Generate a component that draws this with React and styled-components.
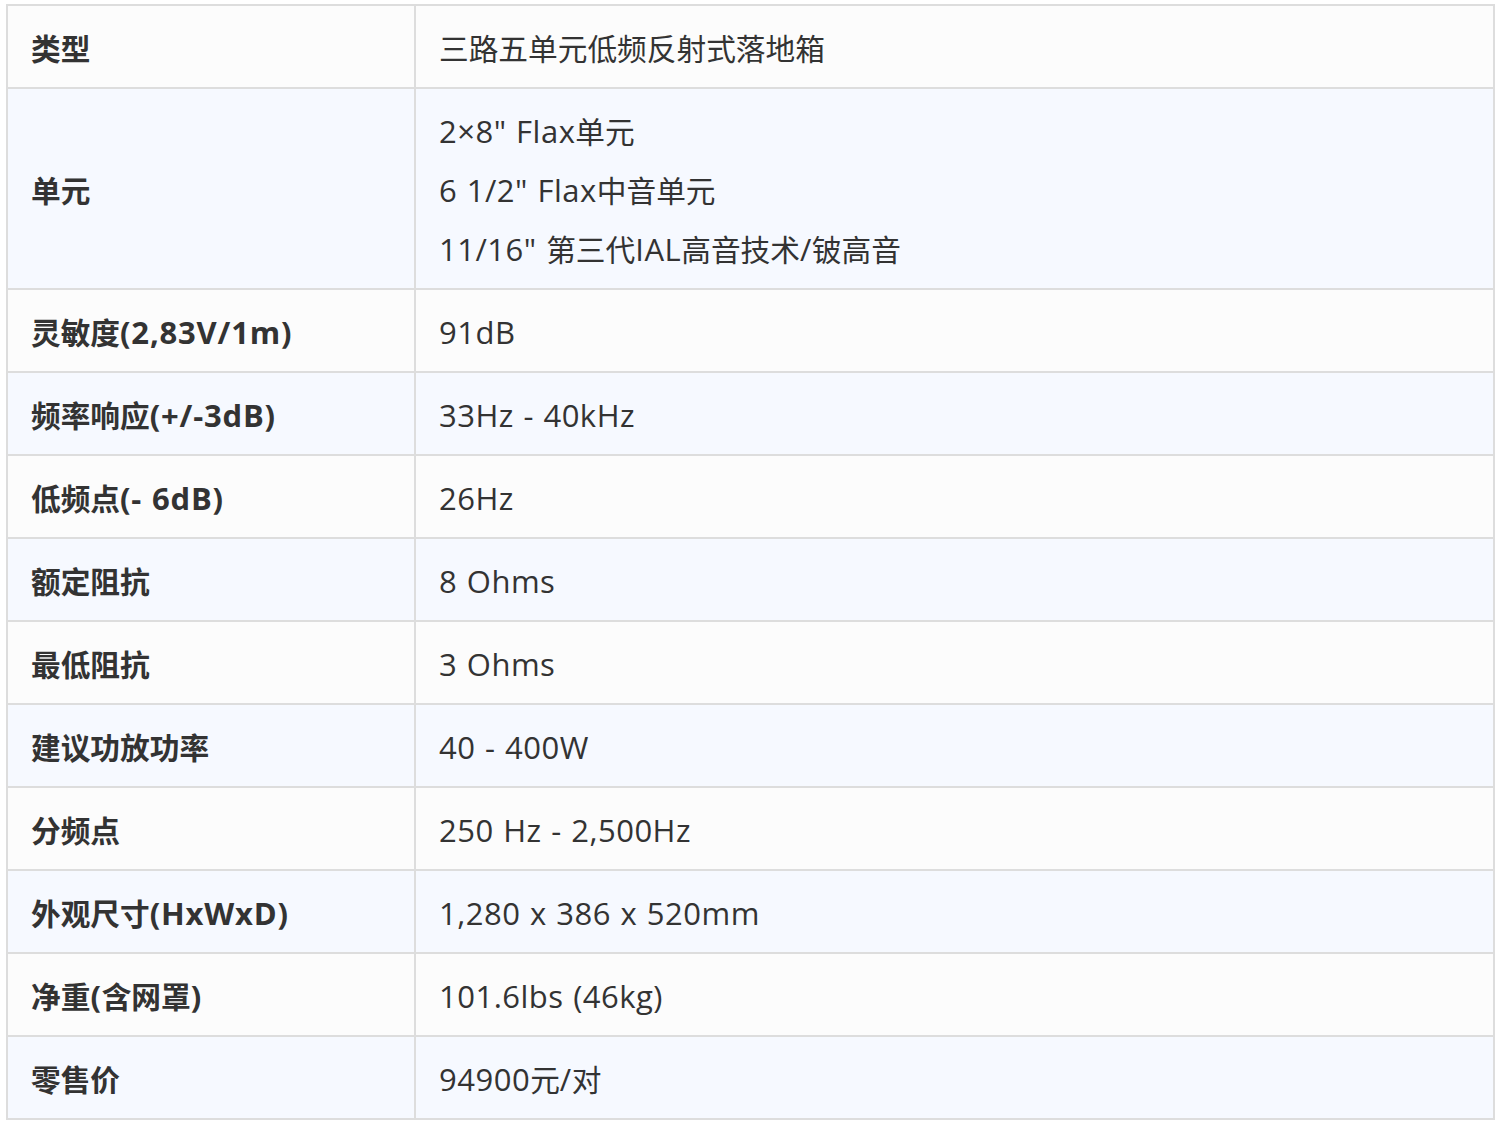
import React from "react";
import styled, { createGlobalStyle } from "styled-components";

const Global = createGlobalStyle`
  html, body { margin: 0; padding: 0; background: #ffffff; }
  body { font-family: "Open Sans", "Noto Sans CJK SC", sans-serif; }
`;

const Page = styled.div`
  padding: 4px 6px;
`;

const Table = styled.table`
  width: 1489px;
  border-collapse: separate;
  border-spacing: 0;
  border-top: 2px solid #dddddd;
  border-left: 2px solid #dddddd;
  font-size: 29.7px;
  line-height: 45px;
  color: #333333;
`;

const Row = styled.tr`
  background: ${(p) => (p.$alt ? "#f6f9ff" : "#fcfcfc")};
`;

const Cell = styled.td`
  padding: 20px 23px 16px;
  border-right: 2px solid #dddddd;
  border-bottom: 2px solid #dddddd;
  vertical-align: middle;
  text-align: left;
  box-sizing: border-box;
`;

const Label = styled(Cell)`
  width: 408px;
  font-weight: 700;
  color: #333333;
`;

const Value = styled(Cell)`
  font-weight: 400;
`;

const Line = styled.div`
  & + & {
    margin-top: 14px;
  }
`;

const Latin = styled.span`
  font-size: 31px;
  letter-spacing: ${(p) => (p.$bold ? "0.8px" : "0.5px")};
  word-spacing: 1px;
`;

const CJK = /([\u2E80-\u9FFF\uFF00-\uFFEF]+)/;

function Text({ children, bold }) {
  return children
    .split(CJK)
    .filter(Boolean)
    .map((part, i) =>
      CJK.test(part) ? (
        <React.Fragment key={i}>{part}</React.Fragment>
      ) : (
        <Latin key={i} $bold={bold}>
          {part}
        </Latin>
      )
    );
}

const rows = [
  ["类型", ["三路五单元低频反射式落地箱"]],
  [
    "单元",
    [
      "2×8\" Flax单元",
      "6 1/2\" Flax中音单元",
      "11/16\" 第三代IAL高音技术/铍高音",
    ],
  ],
  ["灵敏度(2,83V/1m)", ["91dB"]],
  ["频率响应(+/-3dB)", ["33Hz - 40kHz"]],
  ["低频点(- 6dB)", ["26Hz"]],
  ["额定阻抗", ["8 Ohms"]],
  ["最低阻抗", ["3 Ohms"]],
  ["建议功放功率", ["40 - 400W"]],
  ["分频点", ["250 Hz - 2,500Hz"]],
  ["外观尺寸(HxWxD)", ["1,280 x 386 x 520mm"]],
  ["净重(含网罩)", ["101.6lbs (46kg)"]],
  ["零售价", ["94900元/对"]],
];

export default function App() {
  return (
    <Page>
      <Global />
      <Table>
        <tbody>
          {rows.map(([label, values], i) => (
            <Row key={label} $alt={i % 2 === 1}>
              <Label>
                <Text bold>{label}</Text>
              </Label>
              <Value>
                {values.map((v) => (
                  <Line key={v}>
                    <Text>{v}</Text>
                  </Line>
                ))}
              </Value>
            </Row>
          ))}
        </tbody>
      </Table>
    </Page>
  );
}
